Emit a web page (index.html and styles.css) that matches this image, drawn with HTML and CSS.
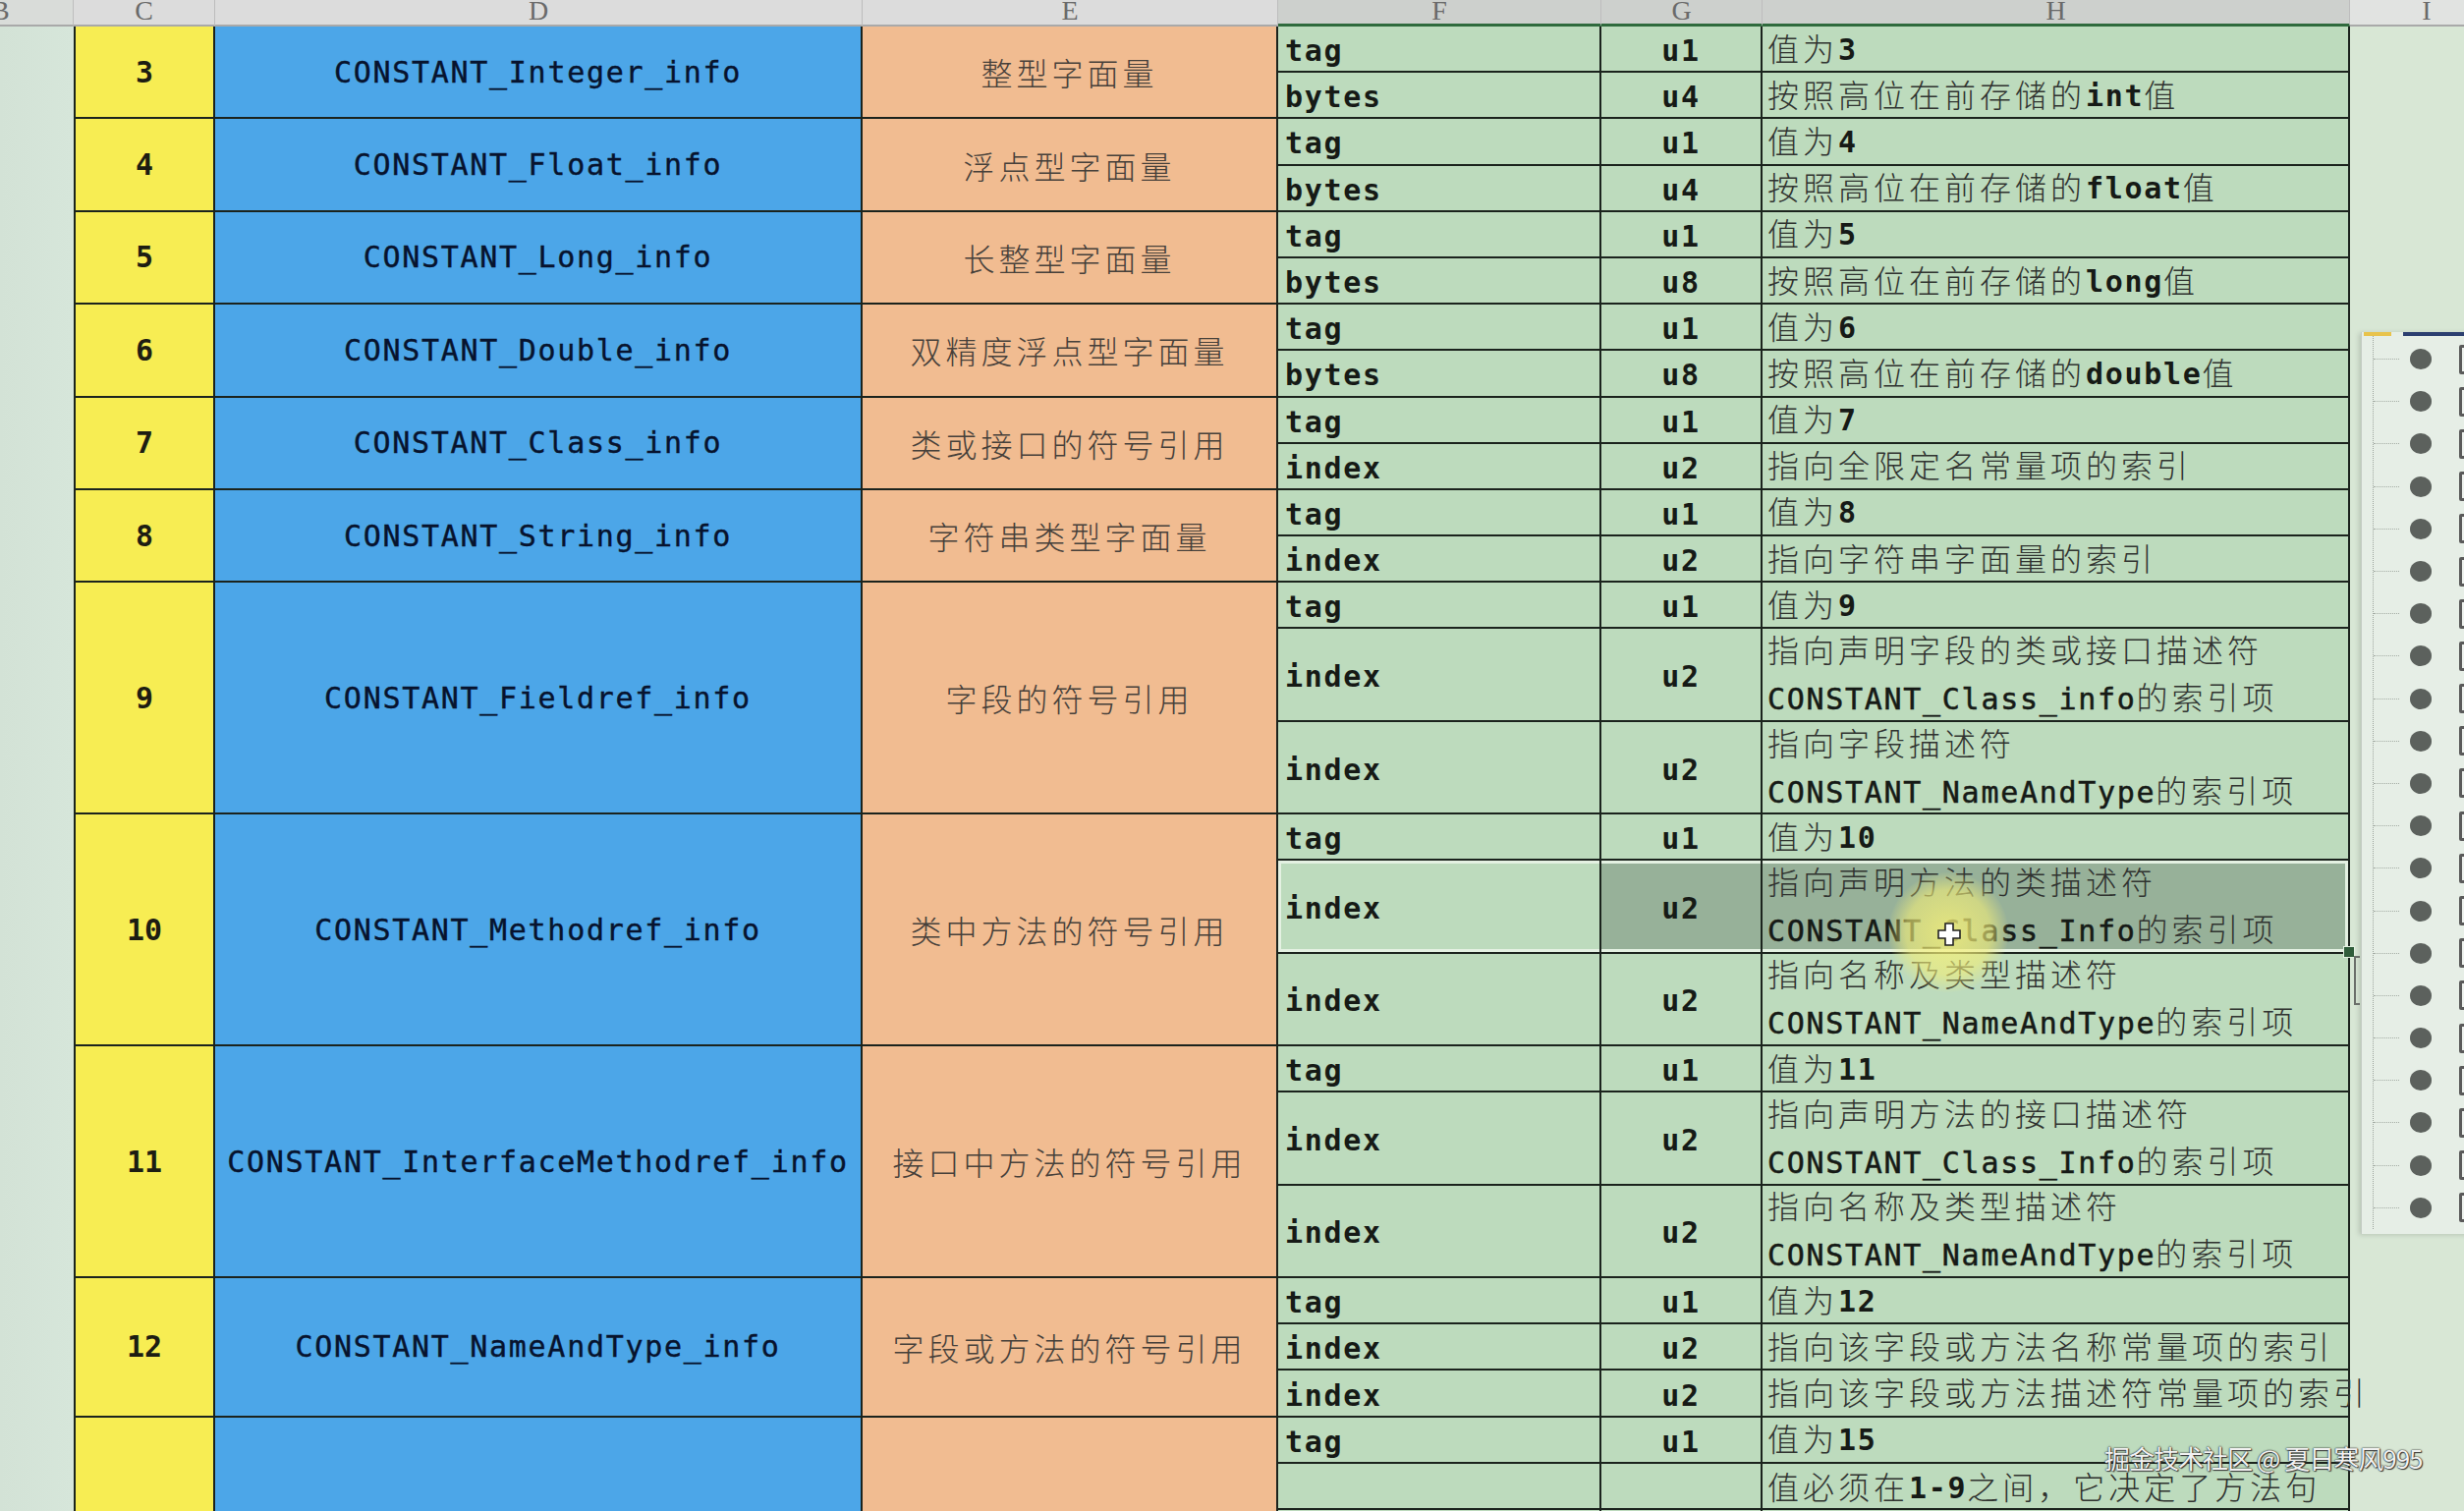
FILE: index.html
```html
<!DOCTYPE html>
<html lang="zh-CN">
<head>
<meta charset="utf-8">
<title>常量池项目类型</title>
<link rel="stylesheet" href="styles.css">
</head>
<body>
<div class="screen">
  <div class="colhead">
    <div class="hd hb">B</div>
    <div class="hd">C</div>
    <div class="hd">D</div>
    <div class="hd">E</div>
    <div class="hd on">F</div>
    <div class="hd on">G</div>
    <div class="hd on">H</div>
    <div class="hd hi">I</div>
  </div>
  <div class="main">
    <div class="gutter"></div>
    <div class="sheet">
      <div class="c r2">3</div><div class="d r2">CONSTANT_Integer_info</div><div class="e r2">整型字面量</div>
      <div class="f">tag</div><div class="g">u1</div><div class="h">值为<b>3</b></div>
      <div class="f">bytes</div><div class="g">u4</div><div class="h">按照高位在前存储的<b>int</b>值</div>

      <div class="c r2">4</div><div class="d r2">CONSTANT_Float_info</div><div class="e r2">浮点型字面量</div>
      <div class="f">tag</div><div class="g">u1</div><div class="h">值为<b>4</b></div>
      <div class="f">bytes</div><div class="g">u4</div><div class="h">按照高位在前存储的<b>float</b>值</div>

      <div class="c r2">5</div><div class="d r2">CONSTANT_Long_info</div><div class="e r2">长整型字面量</div>
      <div class="f">tag</div><div class="g">u1</div><div class="h">值为<b>5</b></div>
      <div class="f">bytes</div><div class="g">u8</div><div class="h">按照高位在前存储的<b>long</b>值</div>

      <div class="c r2">6</div><div class="d r2">CONSTANT_Double_info</div><div class="e r2">双精度浮点型字面量</div>
      <div class="f">tag</div><div class="g">u1</div><div class="h">值为<b>6</b></div>
      <div class="f">bytes</div><div class="g">u8</div><div class="h">按照高位在前存储的<b>double</b>值</div>

      <div class="c r2">7</div><div class="d r2">CONSTANT_Class_info</div><div class="e r2">类或接口的符号引用</div>
      <div class="f">tag</div><div class="g">u1</div><div class="h">值为<b>7</b></div>
      <div class="f">index</div><div class="g">u2</div><div class="h">指向全限定名常量项的索引</div>

      <div class="c r2">8</div><div class="d r2">CONSTANT_String_info</div><div class="e r2">字符串类型字面量</div>
      <div class="f">tag</div><div class="g">u1</div><div class="h">值为<b>8</b></div>
      <div class="f">index</div><div class="g">u2</div><div class="h">指向字符串字面量的索引</div>

      <div class="c r5">9</div><div class="d r5">CONSTANT_Fieldref_info</div><div class="e r5">字段的符号引用</div>
      <div class="f">tag</div><div class="g">u1</div><div class="h">值为<b>9</b></div>
      <div class="f r2">index</div><div class="g r2">u2</div><div class="h r2"><p class="two">指向声明字段的类或接口描述符<br><b class="n">CONSTANT_Class_info</b>的索引项</p></div>
      <div class="f r2">index</div><div class="g r2">u2</div><div class="h r2"><p class="two">指向字段描述符<br><b class="n">CONSTANT_NameAndType</b>的索引项</p></div>

      <div class="c r5">10</div><div class="d r5">CONSTANT_Methodref_info</div><div class="e r5">类中方法的符号引用</div>
      <div class="f">tag</div><div class="g">u1</div><div class="h">值为<b>10</b></div>
      <div class="f r2 sel sf">index</div><div class="g r2 sel sg">u2</div><div class="h r2 sel sh"><p class="two">指向声明方法的类描述符<br><b class="n">CONSTANT_Class_Info</b>的索引项</p><span class="glow"></span><svg class="cursor" width="26" height="26" viewBox="0 0 26 26"><path d="M9 2h8v7h7v8h-7v7H9v-7H2V9h7z" fill="#fff" stroke="#222" stroke-width="1.6"/></svg></div>
      <div class="f r2">index</div><div class="g r2">u2</div><div class="h r2"><p class="two">指向名称及类型描述符<br><b class="n">CONSTANT_NameAndType</b>的索引项</p></div>

      <div class="c r5">11</div><div class="d r5">CONSTANT_InterfaceMethodref_info</div><div class="e r5">接口中方法的符号引用</div>
      <div class="f">tag</div><div class="g">u1</div><div class="h">值为<b>11</b></div>
      <div class="f r2">index</div><div class="g r2">u2</div><div class="h r2"><p class="two">指向声明方法的接口描述符<br><b class="n">CONSTANT_Class_Info</b>的索引项</p></div>
      <div class="f r2">index</div><div class="g r2">u2</div><div class="h r2"><p class="two">指向名称及类型描述符<br><b class="n">CONSTANT_NameAndType</b>的索引项</p></div>

      <div class="c r3">12</div><div class="d r3">CONSTANT_NameAndType_info</div><div class="e r3">字段或方法的符号引用</div>
      <div class="f">tag</div><div class="g">u1</div><div class="h">值为<b>12</b></div>
      <div class="f">index</div><div class="g">u2</div><div class="h">指向该字段或方法名称常量项的索引</div>
      <div class="f">index</div><div class="g">u2</div><div class="h over">指向该字段或方法描述符常量项的索引</div>

      <div class="c r3"></div><div class="d r3"></div><div class="e r3"></div>
      <div class="f">tag</div><div class="g">u1</div><div class="h">值为<b>15</b></div>
      <div class="f"></div><div class="g"></div><div class="h last">值必须在<b>1-9</b>之间，它决定了方法句</div>
      <div class="f"></div><div class="g"></div><div class="h"></div>
    </div>
    <div class="side">
      <div class="panel">
        <div class="panel-top"><i class="ty"></i><i class="tb"></i></div>
        <ul class="layers">
          <li><i class="tick"></i><i class="dot"></i><i class="box"></i></li>
          <li><i class="tick"></i><i class="dot"></i><i class="box"></i></li>
          <li><i class="tick"></i><i class="dot"></i><i class="box"></i></li>
          <li><i class="tick"></i><i class="dot"></i><i class="box"></i></li>
          <li><i class="tick"></i><i class="dot"></i><i class="box"></i></li>
          <li><i class="tick"></i><i class="dot"></i><i class="box"></i></li>
          <li><i class="tick"></i><i class="dot"></i><i class="box"></i></li>
          <li><i class="tick"></i><i class="dot"></i><i class="box"></i></li>
          <li><i class="tick"></i><i class="dot"></i><i class="box"></i></li>
          <li><i class="tick"></i><i class="dot"></i><i class="box"></i></li>
          <li><i class="tick"></i><i class="dot"></i><i class="box"></i></li>
          <li><i class="tick"></i><i class="dot"></i><i class="box"></i></li>
          <li><i class="tick"></i><i class="dot"></i><i class="box"></i></li>
          <li><i class="tick"></i><i class="dot"></i><i class="box"></i></li>
          <li><i class="tick"></i><i class="dot"></i><i class="box"></i></li>
          <li><i class="tick"></i><i class="dot"></i><i class="box"></i></li>
          <li><i class="tick"></i><i class="dot"></i><i class="box"></i></li>
          <li><i class="tick"></i><i class="dot"></i><i class="box"></i></li>
          <li><i class="tick"></i><i class="dot"></i><i class="box"></i></li>
          <li><i class="tick"></i><i class="dot"></i><i class="box"></i></li>
          <li><i class="tick"></i><i class="dot"></i><i class="box"></i></li>
        </ul>
      </div>
    </div>
  </div>
  <i class="bracket"></i>
  <div class="wm">掘金技术社区 @ 夏日寒风995</div>
</div>
</body>
</html>
```

FILE: styles.css
```css
html, body {
  margin: 0;
  padding: 0;
}
body {
  width: 2508px;
  height: 1538px;
  overflow: hidden;
  background: #d6e5d6;
}
.screen {
  position: relative;
  width: 2508px;
  height: 1538px;
  overflow: hidden;
  display: flex;
  flex-direction: column;
}

/* column header */
.colhead {
  display: grid;
  grid-template-columns: 75px 144px 659px 423px 329px 164px 598px 1fr;
  height: 27px;
  flex: none;
}
.hd {
  box-sizing: border-box;
  background: #dcdcdc;
  border-right: 1px solid #bdbdbd;
  border-bottom: 2px solid #a9a9a9;
  font: 28px/21px "Liberation Serif", serif;
  color: #6a6a6a;
  text-align: center;
  overflow: hidden;
}
.hd.on {
  background: #cdd0cd;
  border-bottom: 3px solid #2f6a3d;
}
.hd.hb {
  text-align: left;
  text-indent: -9px;
  background: #d9dcd9;
}
.hd.hi {
  background: #e1e3e1;
  border-right: none;
  text-indent: 40px;
}

/* main area */
.main {
  display: flex;
  flex: 1;
  min-height: 0;
}
.gutter {
  width: 75px;
  flex: none;
  background: linear-gradient(90deg, #d3e2d6, #d6e6da);
}
.sheet {
  flex: none;
  display: grid;
  grid-template-columns: 144px 659px 423px 329px 164px 598px;
  grid-auto-rows: 47.2px;
  align-content: start;
}
.sheet > div {
  box-sizing: border-box;
  border-right: 2px solid #1b231d;
  border-bottom: 2px solid #1b231d;
  display: flex;
  align-items: center;
  min-width: 0;
  white-space: nowrap;
}
.r2 { grid-row: span 2; }
.r3 { grid-row: span 3; }
.r5 { grid-row: span 5; }

.c {
  background: #f7ed53;
  border-left: 2px solid #1b231d;
  justify-content: center;
  font: bold 30px "DejaVu Sans Mono", monospace;
  color: #1d1d12;
}
.d {
  background: #4ca6e8;
  justify-content: center;
  font: 30px "DejaVu Sans Mono", monospace;
  letter-spacing: 1.7px;
  color: #07132e;
  -webkit-text-stroke: 0.4px #07132e;
}
.e {
  background: #f1bc91;
  justify-content: center;
  font: 300 32px "Noto Sans CJK SC", sans-serif;
  letter-spacing: 4px;
  color: #46403a;
}
.f, .g, .h {
  background: #bddbbd;
}
.f {
  padding-left: 7px;
  padding-top: 4px;
  font: bold 30px "DejaVu Sans Mono", monospace;
  letter-spacing: 1.7px;
  color: #161a16;
}
.g {
  justify-content: center;
  padding-top: 4px;
  font: bold 30px "DejaVu Sans Mono", monospace;
  letter-spacing: 1.7px;
  color: #161a16;
}
.h {
  padding-left: 5px;
  padding-top: 2px;
  font: 300 32px/44px "DejaVu Sans Mono", "Noto Sans CJK SC", monospace;
  letter-spacing: 4px;
  color: #303330;
}
.h.last {
  line-height: 36px;
  padding-top: 6px;
}
.h b {
  font-size: 30px;
  font-weight: bold;
  letter-spacing: 1.7px;
  color: #161a16;
}
.h b.n {
  font-weight: normal;
  -webkit-text-stroke: 0.5px #161a16;
}
.h.over {
  position: relative;
  z-index: 1;
}
.two {
  margin: 0;
  line-height: 48px;
}

/* selection */
.sel { border-bottom-color: #3d6c46; }
.sf {
  box-shadow: inset 3px 0 0 #e4f1e2, inset 0 3px 0 #e4f1e2, inset 0 -3px 0 #e4f1e2;
}
.sg, .sh {
  background: #97b199;
  box-shadow: inset 0 3px 0 #e4f1e2, inset 0 -3px 0 #e4f1e2;
}
.sh {
  position: relative;
  box-shadow: inset 0 3px 0 #e4f1e2, inset 0 -3px 0 #e4f1e2, inset -3px 0 0 #e4f1e2;
}
.sh::after {
  content: "";
  position: absolute;
  right: -7px;
  bottom: -6px;
  width: 10px;
  height: 10px;
  background: #2f5d3a;
  border: 1px solid #e4f1e2;
}
.glow {
  position: absolute;
  left: 128px;
  top: 12px;
  width: 122px;
  height: 122px;
  border-radius: 50%;
  background: radial-gradient(circle, rgba(248, 242, 120, 0.8) 0%, rgba(242, 238, 120, 0.6) 50%, rgba(240, 236, 120, 0) 72%);
}
.cursor {
  position: absolute;
  left: 177px;
  top: 62px;
}

/* right side */
.side {
  flex: 1;
  background: #d8e7d5;
  min-width: 0;
}
.panel {
  margin: 311px 0 0 11px;
  width: 140px;
  height: 918px;
  background: #e6eee6;
  border-left: 1px solid #c3cbc3;
  box-shadow: -2px 1px 5px rgba(0, 0, 0, 0.15);
}
.panel-top {
  display: flex;
  height: 4px;
}
.ty {
  width: 28px;
  margin-left: 2px;
  background: #e8c34c;
}
.tb {
  flex: 1;
  margin-left: 12px;
  background: #2c3f70;
}
.layers {
  list-style: none;
  margin: 0 0 0 11px;
  padding: 2px 0 0;
  border-left: 1px dotted #9ea69e;
}
.layers li {
  display: flex;
  align-items: center;
  height: 43.2px;
}
.tick {
  width: 26px;
  border-top: 1px dotted #a4aca4;
}
.dot {
  width: 22px;
  height: 21px;
  margin-left: 11px;
  border-radius: 50%;
  background: #5c615d;
}
.box {
  box-sizing: border-box;
  width: 30px;
  height: 30px;
  margin-left: 28px;
  border: 3px solid #5a5a5a;
  border-radius: 2px;
  background: #eef2ee;
}
.bracket {
  position: absolute;
  left: 2396px;
  top: 973px;
  width: 6px;
  height: 50px;
  box-sizing: border-box;
  border: 2px solid #6a6f6a;
  border-right: none;
}

/* watermark */
.wm {
  position: absolute;
  z-index: 2;
  left: 2142px;
  top: 1472px;
  font: 26px/24px "Noto Sans CJK SC", sans-serif;
  letter-spacing: -1px;
  color: rgba(255, 255, 255, 0.95);
  text-shadow: 0 0 2px #2a2a2a, 0 0 1px #2a2a2a, 1px 1px 1px #444;
}
```
